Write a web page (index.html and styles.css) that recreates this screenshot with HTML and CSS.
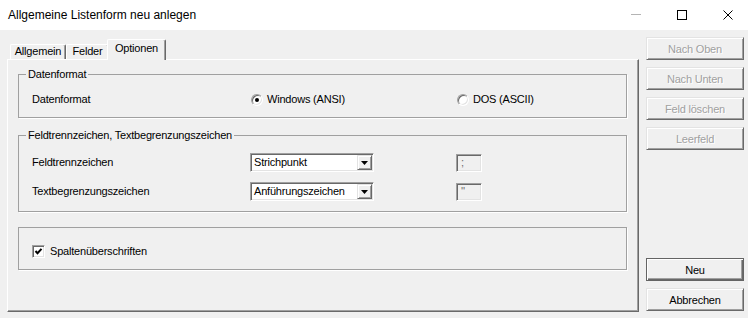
FILE: index.html
```html
<!DOCTYPE html>
<html lang="de">
<head>
    <meta charset="UTF-8">
    <title>Allgemeine Listenform neu anlegen</title>
    <link rel="stylesheet" href="styles.css">
</head>
<body>
    <div class="window">
        <div class="titlebar">
            <span class="title">Allgemeine Listenform neu anlegen</span>
            <div class="caption-buttons">
                <span class="caption-button">
                    <svg width="10" height="10" viewBox="0 0 10 10"><line x1="0" y1="4.5" x2="10" y2="4.5" stroke="#b4b4b4" stroke-width="1"/></svg>
                </span>
                <span class="caption-button">
                    <svg width="10" height="10" viewBox="0 0 10 10"><rect x="0.5" y="0.5" width="9" height="9" fill="none" stroke="#000" stroke-width="1"/></svg>
                </span>
                <span class="caption-button">
                    <svg width="10" height="10" viewBox="0 0 10 10"><path d="M0.5 0.5 L9.5 9.5 M9.5 0.5 L0.5 9.5" stroke="#000" stroke-width="1" fill="none"/></svg>
                </span>
            </div>
        </div>

        <div class="client">
            <div class="tab-area">
                <div class="tab-strip">
                    <div class="tab tab-allgemein">Allgemein</div>
                    <div class="tab tab-felder">Felder</div>
                    <div class="tab tab-optionen active">Optionen</div>
                </div>

                <div class="tab-panel">
                    <!-- Datenformat -->
                    <fieldset class="group group-format">
                        <legend>Datenformat</legend>
                        <div class="row">
                            <span class="label">Datenformat</span>
                            <span class="option"><span class="radio checked"></span>Windows (ANSI)</span>
                            <span class="option"><span class="radio"></span>DOS (ASCII)</span>
                        </div>
                    </fieldset>

                    <!-- Trennzeichen -->
                    <fieldset class="group group-sep">
                        <legend>Feldtrennzeichen, Textbegrenzungszeichen</legend>
                        <div class="row">
                            <span class="label">Feldtrennzeichen</span>
                            <div class="combo">
                                <span class="combo-text">Strichpunkt</span>
                                <span class="combo-button"><svg width="7" height="4" viewBox="0 0 7 4"><polygon points="0,0 7,0 3.5,4" fill="#000"/></svg></span>
                            </div>
                            <div class="edit">;</div>
                        </div>
                        <div class="row">
                            <span class="label">Textbegrenzungszeichen</span>
                            <div class="combo">
                                <span class="combo-text">Anführungszeichen</span>
                                <span class="combo-button"><svg width="7" height="4" viewBox="0 0 7 4"><polygon points="0,0 7,0 3.5,4" fill="#000"/></svg></span>
                            </div>
                            <div class="edit">''</div>
                        </div>
                    </fieldset>

                    <!-- Spaltenüberschriften -->
                    <fieldset class="group group-header">
                        <div class="check-row">
                            <span class="checkbox"><svg width="9" height="9" viewBox="0 0 9 9"><polyline points="1.5,4 3.5,6.2 7.5,1.8" fill="none" stroke="#000" stroke-width="2"/></svg></span>
                            Spaltenüberschriften
                        </div>
                    </fieldset>
                </div>
            </div>

            <div class="side-buttons">
                <button class="btn" disabled>Nach Oben</button>
                <button class="btn" disabled>Nach Unten</button>
                <button class="btn" disabled>Feld löschen</button>
                <button class="btn" disabled>Leerfeld</button>
                <div class="bottom-buttons">
                    <button class="btn default">Neu</button>
                    <button class="btn">Abbrechen</button>
                </div>
            </div>
        </div>
    </div>
</body>
</html>
```

FILE: styles.css
```css
* {
    box-sizing: border-box;
}
body {
    margin: 0;
    background-color: #f0f0f0;
    font-family: 'Liberation Sans', Arial, sans-serif;
    font-size: 11px;
    letter-spacing: -0.2px;
    color: #000;
}
.window {
    width: 748px;
    height: 318px;
    display: flex;
    flex-direction: column;
    overflow: hidden;
}

/* Titelleiste */
.titlebar {
    height: 30px;
    background-color: #fff;
    display: flex;
    align-items: center;
    flex-shrink: 0;
}
.title {
    flex: 1;
    padding-left: 8px;
    font-size: 12px;
    letter-spacing: 0;
}
.caption-buttons {
    display: flex;
    margin-right: -3px;
}
.caption-button {
    width: 46px;
    height: 30px;
    display: flex;
    align-items: center;
    justify-content: center;
}

/* Inhalt */
.client {
    flex: 1;
    display: flex;
}
.tab-area {
    width: 639px;
    padding-left: 7px;
    padding-top: 9px;
}
.tab-strip {
    display: flex;
    align-items: flex-end;
    height: 20px;
    padding-left: 3px;
}
.tab {
    height: 15px;
    line-height: 13px;
    text-align: center;
    border: 1px solid;
    border-color: #fff #696969 transparent #fff;
    border-bottom: 0;
    box-shadow: inset -1px 0 #a0a0a0;
    border-radius: 2px 2px 0 0;
}
.tab-allgemein {
    width: 56px;
}
.tab-felder {
    width: 43px;
}
.tab-optionen {
    width: 59px;
}
.tab.active {
    height: 21px;
    line-height: 16px;
    margin-left: -2px;
    margin-bottom: -1px;
    position: relative;
    z-index: 1;
    background-color: #f0f0f0;
}
.tab-panel {
    width: 632px;
    height: 253px;
    border: 1px solid;
    border-color: #fff #696969 #696969 #fff;
    box-shadow: inset -1px -1px #a0a0a0;
    padding: 0 11px 0 10px;
}

/* Gruppen */
.group {
    margin: 0;
    padding: 0 0 0 7px;
    border: 1px solid #a0a0a0;
    box-shadow: 1px 1px 0 #fff;
    min-inline-size: 0;
}
.group legend {
    padding: 0 2px;
    line-height: 13px;
}
.group-format {
    margin-top: 8px;
    padding-top: 12px;
    padding-bottom: 11px;
}
.group-sep {
    margin-top: 11px;
    padding-top: 11px;
    padding-bottom: 10px;
}
.group-header {
    margin-top: 15px;
    padding-top: 17px;
    padding-bottom: 11px;
}
.row {
    display: grid;
    grid-template-columns: 218px 206px auto;
    align-items: center;
    margin-left: 6px;
    line-height: 13px;
}
.group-sep .row + .row {
    margin-top: 10px;
}
.option {
    display: flex;
    align-items: center;
    gap: 4px;
    padding-left: 1px;
}
.radio {
    width: 12px;
    height: 12px;
    border-radius: 50%;
    background-color: #fff;
    border: 1px solid;
    border-color: #a0a0a0 #fff #fff #a0a0a0;
    box-shadow: inset 1px 1px #696969, inset -1px -1px #e3e3e3;
    display: flex;
    align-items: center;
    justify-content: center;
}
.radio.checked::after {
    content: '';
    width: 4px;
    height: 4px;
    border-radius: 50%;
    background-color: #000;
}

/* Kombinationsfeld und Eingabefeld */
.combo {
    width: 124px;
    height: 19px;
    display: flex;
    align-items: center;
    background-color: #fff;
    border: 1px solid;
    border-color: #a0a0a0 #fff #fff #a0a0a0;
    box-shadow: inset 1px 1px #696969, inset -1px -1px #e3e3e3;
}
.combo-text {
    flex: 1;
    padding-left: 3px;
}
.combo-button {
    width: 15px;
    height: 15px;
    margin-right: 1px;
    display: flex;
    align-items: center;
    justify-content: center;
    background-color: #f0f0f0;
    border: 1px solid;
    border-color: #e3e3e3 #696969 #696969 #e3e3e3;
    box-shadow: inset 1px 1px #fff, inset -1px -1px #a0a0a0;
}
.edit {
    width: 26px;
    height: 18px;
    line-height: 14px;
    padding-left: 4px;
    color: #6d6d6d;
    border: 1px solid;
    border-color: #a0a0a0 #fff #fff #a0a0a0;
    box-shadow: inset 1px 1px #696969, inset -1px -1px #e3e3e3;
}

/* Kontrollkästchen */
.check-row {
    display: flex;
    align-items: center;
    gap: 5px;
    margin-left: 6px;
    line-height: 13px;
}
.checkbox {
    width: 13px;
    height: 13px;
    background-color: #fff;
    border: 1px solid;
    border-color: #a0a0a0 #fff #fff #a0a0a0;
    box-shadow: inset 1px 1px #696969, inset -1px -1px #e3e3e3;
    display: flex;
    align-items: center;
    justify-content: center;
}

/* Schaltflächen rechts */
.side-buttons {
    width: 98px;
    margin-left: 7px;
    padding-top: 7px;
    padding-bottom: 7px;
    display: flex;
    flex-direction: column;
    gap: 7px;
}
.bottom-buttons {
    margin-top: auto;
    display: flex;
    flex-direction: column;
    gap: 7px;
}
.btn {
    width: 98px;
    height: 23px;
    padding: 0;
    font-family: inherit;
    font-size: 11px;
    letter-spacing: -0.2px;
    color: #000;
    background-color: #f0f0f0;
    border: 1px solid;
    border-color: #e3e3e3 #696969 #696969 #e3e3e3;
    box-shadow: inset 1px 1px #fff, inset -1px -1px #a0a0a0;
}
.btn:disabled {
    color: #a0a0a0;
    text-shadow: 1px 1px #fff;
}
.btn.default {
    border-color: #646464;
    box-shadow: inset 1px 1px #fff, inset -1px -1px #696969, inset -2px -2px #a0a0a0;
}
```
